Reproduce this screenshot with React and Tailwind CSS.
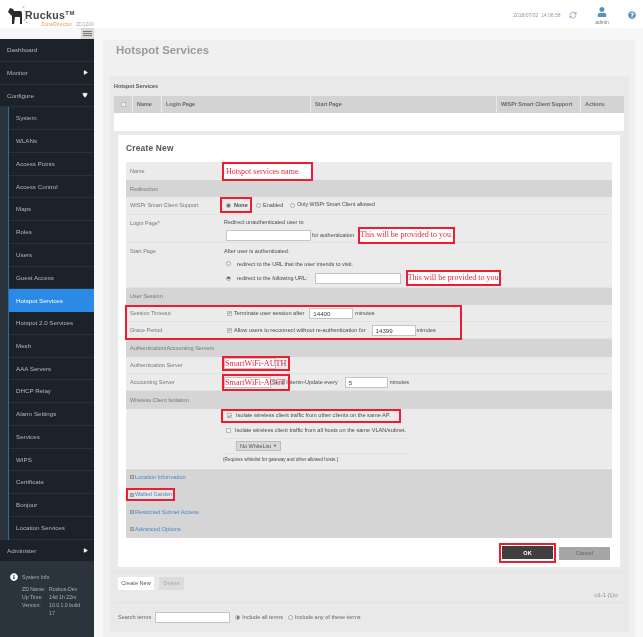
import React from 'react';
import { RefreshCw, Play } from 'lucide-react';
import { FaUser, FaQuestionCircle, FaInfoCircle, FaCheck } from 'react-icons/fa';

const subItems = [
  'System', 'WLANs', 'Access Points', 'Access Control', 'Maps', 'Roles', 'Users', 'Guest Access',
  'Hotspot Services', 'Hotspot 2.0 Services', 'Mesh', 'AAA Servers', 'DHCP Relay', 'Alarm Settings',
  'Services', 'WIPS', 'Certificate', 'Bonjour', 'Location Services',
];

const Logo = () => (
  <div className="relative w-[94px] h-[28px]">
    <svg width="26" height="22" viewBox="0 0 26 20" className="absolute left-[6px] top-[4px]">
      <path d="M2 7 L4 3 L7 4 L8 6 L15 6 L16 8 L16 19 L14 19 L14 12 L9 12 L8 19 L6 19 L6 11 L4 9 Z" fill="#2a2a2a" />
      <circle cx="17.5" cy="2" r="1" fill="#f3b58a" />
      <circle cx="19" cy="6" r="0.8" fill="#f3b58a" />
      <circle cx="18.5" cy="15" r="1" fill="#f3b58a" />
      <circle cx="20.5" cy="17.5" r="1" fill="#f3b58a" />
    </svg>
    <div className="absolute left-[25px] top-[9px] text-[10.5px] leading-[13px] font-bold text-[#444] tracking-[0.4px]">
      Ruckus<sup className="text-[6px] top-[-4px]">TM</sup>
    </div>
    <div className="absolute left-[41px] top-[21px] text-[5px] leading-[6px] text-[#f0b48c] font-bold">ZoneDirector</div>
    <div className="absolute left-[76px] top-[21px] text-[5px] leading-[6px] text-[#aaa]">ZD1200</div>
  </div>
);

const Header = () => (
  <div className="h-[28px] bg-white flex items-start">
    <Logo />
    <div className="ml-auto flex items-start">
      <div className="mt-[12px] text-[5px] leading-[6px] text-[#999]">2018/07/02&nbsp;&nbsp;14:06:58</div>
      <RefreshCw size={8} strokeWidth={2} className="mt-[11px] ml-[8px] text-[#6c9ac4]" />
      <div className="w-[30px] ml-[10.5px] flex flex-col items-center">
        <FaUser size={10} className="mt-[7px] text-[#5b8fbd]" />
        <div className="text-[5px] leading-[6px] text-[#777] mt-[2px]">admin</div>
      </div>
      <FaQuestionCircle size={8} className="mt-[11px] ml-[10.5px] mr-[7.5px] text-[#5b8fbd]" />
    </div>
  </div>
);

const TopItem = ({ label, arrow }) => (
  <div className="h-[22.75px] bg-[#1b222a] border-b border-[#29313a] flex items-center pl-[7px] pr-[6px] text-[6.2px] text-[#b4b8bc]">
    {label}
    {arrow === 'right' && <Play size={5} className="ml-auto text-white fill-white" />}
    {arrow === 'down' && <Play size={6} className="ml-auto text-white fill-white rotate-90" />}
  </div>
);

const Sidebar = () => (
  <div className="w-[94px] shrink-0 flex flex-col">
    <div className="h-[11px] bg-[#f7f7f7] flex justify-end">
      <div className="w-[13px] h-[11px] bg-[#d9d9d9] flex flex-col justify-center gap-[1px] px-[2px]">
        <div className="h-[1px] bg-[#777]" />
        <div className="h-[1px] bg-[#777]" />
        <div className="h-[1px] bg-[#777]" />
      </div>
    </div>
    <TopItem label="Dashboard" />
    <TopItem label="Monitor" arrow="right" />
    <TopItem label="Configure" arrow="down" />
    <div className="bg-[#2b343c] pl-[8px]">
      <div className="border-l border-[#2e6da4]">
        {subItems.map((s) => (
          <div
            key={s}
            className={
              s === 'Hotspot Services'
                ? 'h-[22.75px] bg-[#2b8ae6] flex items-center pl-[7px] text-[6.2px] text-white'
                : 'h-[22.75px] bg-[#1b222a] border-b border-[#29313a] flex items-center pl-[7px] text-[6.2px] text-[#b4b8bc]'
            }
          >
            {s}
          </div>
        ))}
      </div>
    </div>
    <TopItem label="Administer" arrow="right" />
    <div className="flex-1 bg-[#2b343c] pl-[10px] pt-[11px] text-[5.2px] leading-[8px] text-[#aab0b5]">
      <div className="flex items-center gap-[4px] mb-[4px]">
        <FaInfoCircle size={8} className="text-white" />
        <span>System Info</span>
      </div>
      <div className="pl-[12px]">
        <div className="flex"><span className="w-[27px]">ZD Name:</span><span>Ruckus-Dev</span></div>
        <div className="flex"><span className="w-[27px]">Up Time:</span><span>14d 1h 22m</span></div>
        <div className="flex"><span className="w-[27px]">Version:</span><span className="w-[34px]">10.0.1.0 build 17</span></div>
      </div>
    </div>
  </div>
);

const Radio = ({ checked, className = '' }) => (
  <span className={`inline-flex shrink-0 w-[5px] h-[5px] rounded-full border-[0.5px] border-[#aaa] bg-[#f2f2f2] items-center justify-center ${className}`}>
    {checked && <span className="w-[2.5px] h-[2.5px] rounded-full bg-[#666]" />}
  </span>
);

const Check = ({ checked, className = '' }) => (
  <span className={`inline-flex shrink-0 w-[5px] h-[5px] border-[0.5px] border-[#bbb] bg-[#f2f2f2] items-center justify-center ${className}`}>
    {checked && <FaCheck size={4} className="text-[#555]" />}
  </span>
);

const Input = ({ className = '', children }) => (
  <span className={`inline-block shrink-0 h-[11px] bg-white border border-[#c4c4c4] text-[6.2px] leading-[9px] pl-[3px] text-[#444] ${className}`}>
    {children}
  </span>
);

const Band = ({ children }) => (
  <div className="h-[17.3px] bg-[#d5d5d5] flex items-center pl-[4px] text-[#777]">{children}</div>
);

const Row = ({ label, h = 'h-[17.3px]', top, children }) => (
  <div className={`${h} flex border-b border-[#e3e3e3]`}>
    <div className={`w-[96px] shrink-0 pl-[4px] text-[#777] ${top ? 'pt-[4px]' : 'flex items-center'}`}>{label}</div>
    <div className="flex-1 flex items-center min-w-0">{children}</div>
  </div>
);

const Note = ({ className = '', children }) => (
  <span className={`inline-flex shrink-0 items-center whitespace-nowrap bg-white border-2 border-[#ee1c2e] font-['Liberation_Serif',serif] text-[#e8283a] text-[8px] ${className}`}>
    {children}
  </span>
);

const Accordion = ({ label, boxed }) => (
  <div className="h-[17.3px] flex items-center">
    <div className={boxed ? 'h-[13px] w-[49px] border-2 border-[#ee1c2e] bg-[#e6e6e6] flex items-center pl-[2px] gap-[1px]' : 'flex items-center pl-[4px] gap-[1px]'}>
      <span className="w-[4px] h-[4px] bg-[#bbb] border-[0.5px] border-[#999] shrink-0" />
      <span className="text-[#4a86c5] text-[5.6px] whitespace-nowrap">{label}</span>
    </div>
  </div>
);

const Form = () => (
  <div className="mt-[9px] mx-[8px] bg-[#ebebeb] text-[5.5px] text-[#4a4a4a]">
    <div className="h-[18px] flex">
      <div className="w-[96px] pl-[4px] flex items-center text-[#777]">Name</div>
      <Note className="w-[91px] h-[19px] pl-[2px] z-10">Hotspot services name</Note>
    </div>
    <Band>Redirection</Band>
    <Row label="WISPr Smart Client Support">
      <span className="-ml-[2px] w-[32px] h-[16px] border-2 border-[#ee1c2e] flex items-center pl-[4px] gap-[3px] font-bold shrink-0">
        <Radio checked />None
      </span>
      <Radio className="ml-[4px]" />
      <span className="ml-[2px]">Enabled</span>
      <Radio className="ml-[7px]" />
      <span className="ml-[2px] text-[5.3px]">Only WISPr Smart Client allowed</span>
    </Row>
    <Row label="Login Page*" h="h-[28px]" top>
      <div className="self-start flex flex-col gap-[1px] pl-[2px] pt-[3px]">
        <span>Redirect unauthenticated user to</span>
        <div className="flex items-center">
          <Input className="ml-[2px] w-[85px]" />
          <span className="ml-[1px]">for authentication</span>
          <Note className="ml-[4px] w-[97px] h-[17px]">This will be provided to you</Note>
        </div>
      </div>
    </Row>
    <Row label="Start Page" h="h-[45px]" top>
      <div className="self-start flex flex-col pl-[2px] pt-[4px]">
        <span>After user is authenticated.</span>
        <div className="flex items-center pl-[2px] gap-[6px] mt-[5px]"><Radio /><span>redirect to the URL that the user intends to visit.</span></div>
        <div className="flex items-center pl-[2px] gap-[6px] mt-[2px]">
          <Radio checked />
          <span>redirect to the following URL:</span>
          <Input className="ml-[1px] w-[86px]" />
          <Note className="-ml-[1px] w-[95px] h-[16px]">This will be provided to you</Note>
        </div>
      </div>
    </Row>
    <Band>User Session</Band>
    <div className="relative">
      <div className="absolute -left-[1px] top-0 w-[337px] h-[35px] border-2 border-[#ee1c2e]" />
      <Row label="Session Timeout">
        <Check checked className="ml-[5px]" />
        <span className="ml-[2px] text-[5.6px]">Terminate user session after</span>
        <Input className="ml-[5px] w-[44px]">14400</Input>
        <span className="ml-[2px]">minutes</span>
      </Row>
      <Row label="Grace Period">
        <Check checked className="ml-[5px]" />
        <span className="ml-[2px] text-[5.6px]">Allow users to reconnect without re-authentication for</span>
        <Input className="ml-[6px] w-[44px]">14399</Input>
        <span className="ml-[1px]">minutes</span>
      </Row>
    </div>
    <Band>Authentication/Accounting Servers</Band>
    <Row label="Authentication Server">
      <div className="relative">
        <Input className="ml-[2px] w-[52px]" />
        <div className="absolute left-0 -top-[2px] w-[68px] h-[15px] border-2 border-[#ee1c2e] font-['Liberation_Serif',serif] text-[#e8283a] text-[8.2px] leading-[12px] pl-[1px] whitespace-nowrap">SmartWiFi-AUTH</div>
      </div>
    </Row>
    <Row label="Accounting Server">
      <div className="relative flex items-center">
        <Input className="ml-[2px] w-[47px]" />
        <span className="ml-[1px]">Send Interim-Update every</span>
        <Input className="ml-[7px] w-[43px]">5</Input>
        <span className="ml-[2px]">minutes</span>
        <div className="absolute left-0 -top-[3px] w-[68px] h-[17px] border-2 border-[#ee1c2e] font-['Liberation_Serif',serif] text-[#e8283a] text-[8.2px] leading-[13px] pl-[1px] whitespace-nowrap">SmartWiFi-ACCT</div>
      </div>
    </Row>
    <Band>Wireless Client Isolation</Band>
    <div className="h-[59px] flex flex-col pl-[95px]">
      <div className="w-[180px] h-[14px] border-2 border-[#ee1c2e] flex items-center pl-[4px] gap-[4px] text-[5.6px] font-medium">
        <Check checked /><span className="whitespace-nowrap">Isolate wireless client traffic from other clients on the same AP.</span>
      </div>
      <div className="w-[188px] h-[16px] flex items-center pl-[5px] gap-[4px] border-b border-[#e3e3e3] text-[5.6px] font-medium">
        <Check /><span className="whitespace-nowrap">Isolate wireless client traffic from all hosts on the same VLAN/subnet.</span>
      </div>
      <div className="w-[188px] h-[15px] flex items-center pl-[15px] border-b border-[#e3e3e3]">
        <span className="w-[45px] h-[10px] bg-[#d8d8d8] border border-[#bbb] flex items-center justify-center gap-[2px] text-[#555]">No WhiteList <span className="text-[4px]">▼</span></span>
      </div>
      <div className="pt-[3px] pl-[2px] text-[4.6px]">(Requires whitelist for gateway and other allowed hosts.)</div>
    </div>
    <div className="bg-[#d5d5d5] border-t border-[#f2f2f2]">
      <Accordion label="Location Information" />
      <Accordion label="Walled Garden" boxed />
      <Accordion label="Restricted Subnet Access" />
      <Accordion label="Advanced Options" />
    </div>
  </div>
);

const Actions = () => (
  <div className="flex justify-end items-start mt-[5px] pr-[10px]">
    <div className="w-[57px] h-[20px] border-2 border-[#ee1c2e] flex items-center justify-center mr-[3px]">
      <div className="w-[51px] h-[13px] bg-[#3f3f3f] text-white text-[5.6px] font-bold flex items-center justify-center">OK</div>
    </div>
    <div className="w-[51px] h-[13px] mt-[4px] bg-[#a6a6a6] text-[#666] text-[5.6px] flex items-center justify-center">Cancel</div>
  </div>
);

const tableCols = [
  ['w-[18px]', ''],
  ['w-[28px]', 'Name'],
  ['w-[148px]', 'Login Page'],
  ['w-[185px]', 'Start Page'],
  ['w-[83px]', 'WISPr Smart Client Support'],
  ['flex-1', 'Actions'],
];

const App = () => (
  <div className="w-[643px] h-[637px] overflow-hidden bg-white flex flex-col font-['Liberation_Sans',Arial,sans-serif] blur-[0.3px]">
    <Header />
    <div className="flex-1 flex min-h-0">
      <Sidebar />
      <div className="flex-1 bg-[#f7f7f7] pt-[12px] pl-[9px] pr-[8px] min-w-0">
        <div className="h-[597px] bg-[#f0f0f0] pl-[7px] pr-[6px]">
          <div className="h-[36px] pl-[6px] pt-[2px] text-[11.4px] leading-[16px] font-bold text-[#9a9a9a]">Hotspot Services</div>
          <div className="h-[556px] bg-[#e9e9e9] pl-[4px]">
            <div className="h-[20px] flex items-center text-[5.4px] font-bold text-[#555]">Hotspot Services</div>
            <div className="mr-[5px] flex h-[17px] text-[5.4px] font-bold text-[#666] gap-[1px]">
              {tableCols.map(([w, t], i) => (
                <div key={i} className={`${w} bg-[#d3d3d3] flex items-center ${i === 0 ? 'justify-center' : 'pl-[4px]'}`}>
                  {i === 0 ? <Check /> : t}
                </div>
              ))}
            </div>
            <div className="mr-[5px] h-[18px] bg-white" />
            <div className="mt-[4px] ml-[4px] mr-[9px] h-[432px] bg-white">
              <div className="pt-[8px] pl-[8px] text-[8.4px] leading-[10px] font-bold text-[#555] tracking-[0.2px]">Create New</div>
              <Form />
              <Actions />
            </div>
            <div className="mt-[5px] mr-[4px] pl-[4px] h-[31px] border-t border-b border-[#e2e2e2] flex justify-between pr-[7px] pt-[4px]">
              <div className="flex gap-[5px] items-start text-[5.6px]">
                <div className="w-[36px] h-[13px] bg-white text-[#555] flex items-center justify-center">Create New</div>
                <div className="w-[25px] h-[13px] bg-[#dcdcdc] text-[#aaa] flex items-center justify-center">Delete</div>
              </div>
              <div className="self-end pb-[4px] text-[5.4px] leading-[6px] text-[#888]">⊙1-1 (1)⊙</div>
            </div>
            <div className="h-[29px] pl-[4px] flex items-center text-[5.6px] text-[#666]">
              <span>Search terms</span>
              <Input className="ml-[4px] w-[75px]" />
              <Radio checked className="ml-[5px]" />
              <span className="ml-[2px]">Include all terms</span>
              <Radio className="ml-[5px]" />
              <span className="ml-[2px]">Include any of these terms</span>
            </div>
          </div>
        </div>
      </div>
    </div>
  </div>
);

export default App;
